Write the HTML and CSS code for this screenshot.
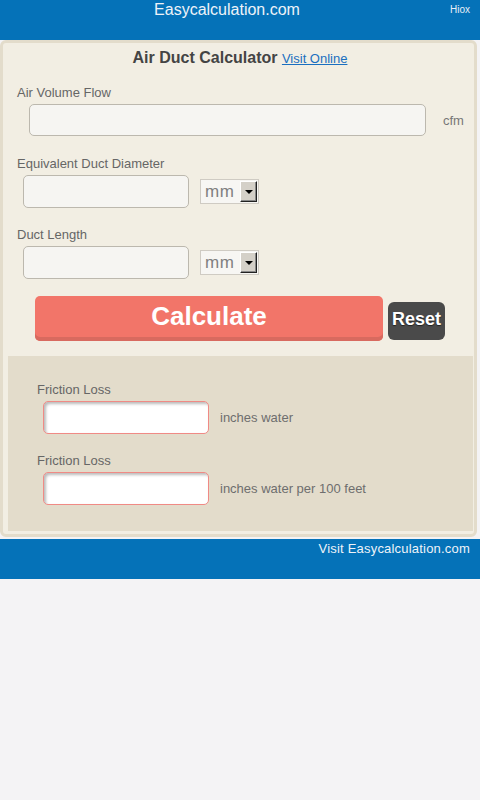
FILE: index.html
```html
<!DOCTYPE html>
<html lang="en">
<head>
<meta charset="utf-8">
<title>Air Duct Calculator</title>
<link rel="stylesheet" href="styles.css">
</head>
<body>
<header class="topbar">
  <div class="site">Easycalculation.com</div>
  <div class="hiox">Hiox</div>
</header>

<main class="card">
  <h1 class="title">Air Duct Calculator <a href="#" class="visit">Visit Online</a></h1>

  <div class="field field-first">
    <label class="label">Air Volume Flow</label>
    <div class="row row-wide">
      <input type="text" class="inp inp-wide">
      <span class="unit unit-cfm">cfm</span>
    </div>
  </div>

  <div class="field field-second">
    <label class="label">Equivalent Duct Diameter</label>
    <div class="row">
      <input type="text" class="inp">
      <div class="select"><span class="sel-text">mm</span><span class="drop"><span class="arrow"></span></span></div>
    </div>
  </div>

  <div class="field">
    <label class="label">Duct Length</label>
    <div class="row">
      <input type="text" class="inp">
      <div class="select"><span class="sel-text">mm</span><span class="drop"><span class="arrow"></span></span></div>
    </div>
  </div>

  <div class="actions">
    <button class="btn-calc">Calculate</button>
    <button class="btn-reset">Reset</button>
  </div>

  <section class="results">
    <div class="rfield">
      <label class="label">Friction Loss</label>
      <div class="row">
        <input type="text" class="out">
        <span class="unit">inches water</span>
      </div>
    </div>
    <div class="rfield">
      <label class="label">Friction Loss</label>
      <div class="row">
        <input type="text" class="out">
        <span class="unit">inches water per 100 feet</span>
      </div>
    </div>
  </section>
</main>

<footer class="foot">
  <a href="#" class="foot-link">Visit Easycalculation.com</a>
</footer>
</body>
</html>
```

FILE: styles.css
```css
* { box-sizing: border-box; }

html, body {
  margin: 0;
  padding: 0;
}

body {
  background: #f4f3f5;
  font-family: "Liberation Sans", Arial, sans-serif;
  width: 480px;
}

.topbar {
  height: 40px;
  background: #0572b8;
  display: flex;
  align-items: flex-start;
}

.site {
  flex: 1;
  text-align: center;
  color: #eef3f8;
  font-size: 16px;
  line-height: 20px;
  padding-left: 4px;
}

.hiox {
  width: 20px;
  margin-right: 10px;
  color: #e6eef6;
  font-size: 10px;
  line-height: 20px;
  text-align: right;
}

.card {
  width: 477px;
  background: #f2eee3;
  border: 3px solid #e3dccb;
  border-radius: 6px;
  margin: 0 0 2px 0;
  padding: 0 0 3px 0;
}

.title {
  margin: 5px 0 0 0;
  padding-left: 3px;
  text-align: center;
  font-size: 16px;
  line-height: 20px;
  font-weight: bold;
  color: #444;
}

.visit {
  font-size: 13px;
  font-weight: normal;
  color: #1a6fc0;
  text-decoration: underline;
}

.field {
  padding-left: 14px;
  margin-top: 19px;
}

.field-first { margin-top: 16px; }

.field-second { margin-top: 20px; }

.label {
  display: block;
  font-size: 13px;
  line-height: 16px;
  color: #666;
}

.row {
  display: flex;
  align-items: center;
  margin-top: 3px;
  padding-left: 6px;
}

.row-wide {
  padding-left: 12px;
}

.inp {
  width: 166px;
  height: 33px;
  border: 1px solid #bcb8ae;
  border-radius: 5px;
  background: #f6f5f2;
  margin: 0;
}

.inp-wide {
  width: 397px;
  height: 32px;
}

.unit {
  font-size: 13px;
  color: #6e6e6e;
  margin-left: 11px;
}

.unit-cfm {
  margin-left: 17px;
  color: #777;
}

.select {
  margin-left: 11px;
  width: 59px;
  height: 25px;
  border: 1px solid #cfcbc3;
  background: #f7f6f3;
  display: flex;
  align-items: center;
  justify-content: space-between;
  padding: 0 1px 0 4px;
}

.sel-text {
  font-size: 17px;
  color: #808080;
  letter-spacing: 0.5px;
}

.drop {
  width: 17px;
  height: 21px;
  background: #d4d0c8;
  border-top: 1px solid #fff;
  border-left: 1px solid #fff;
  border-right: 1px solid #222;
  border-bottom: 1px solid #222;
  box-shadow: inset -1px -1px 0 #888;
  display: flex;
  align-items: center;
  justify-content: center;
}

.arrow {
  width: 0;
  height: 0;
  border-left: 4px solid transparent;
  border-right: 4px solid transparent;
  border-top: 4px solid #000;
  margin-top: 1px;
}

.actions {
  display: flex;
  align-items: flex-end;
  margin-top: 17px;
  padding-left: 32px;
}

.btn-calc {
  width: 348px;
  height: 45px;
  background: #f27569;
  border: none;
  border-radius: 5px;
  box-shadow: inset 0 -4px 0 #d86a5f;
  color: #fff;
  font-family: "Liberation Sans", Arial, sans-serif;
  font-weight: bold;
  font-size: 26px;
  padding: 0 0 4px 0;
  line-height: 41px;
}

.btn-reset {
  margin-left: 5px;
  margin-bottom: 1px;
  width: 57px;
  height: 38px;
  background: #4a4a4a;
  border: none;
  border-radius: 6px;
  color: #fff;
  font-family: "Liberation Sans", Arial, sans-serif;
  font-weight: bold;
  font-size: 18px;
  padding: 0 0 3px 0;
  text-shadow: 0 1px 1px #222;
}

.results {
  margin: 15px 1px 0 5px;
  background: #e3dccb;
  padding: 26px 0 26px 29px;
}

.rfield + .rfield { margin-top: 19px; }

.out {
  width: 166px;
  height: 33px;
  border: 1px solid #f08a85;
  border-radius: 5px;
  background: #fff;
  box-shadow: inset 2px 2px 3px #bbb;
  margin: 0;
}

.foot {
  height: 40px;
  background: #0572b8;
  text-align: right;
  padding-right: 10px;
}

.foot-link {
  color: #eef3f8;
  font-size: 13px;
  line-height: 18px;
  text-decoration: none;
  letter-spacing: 0.2px;
}
```
